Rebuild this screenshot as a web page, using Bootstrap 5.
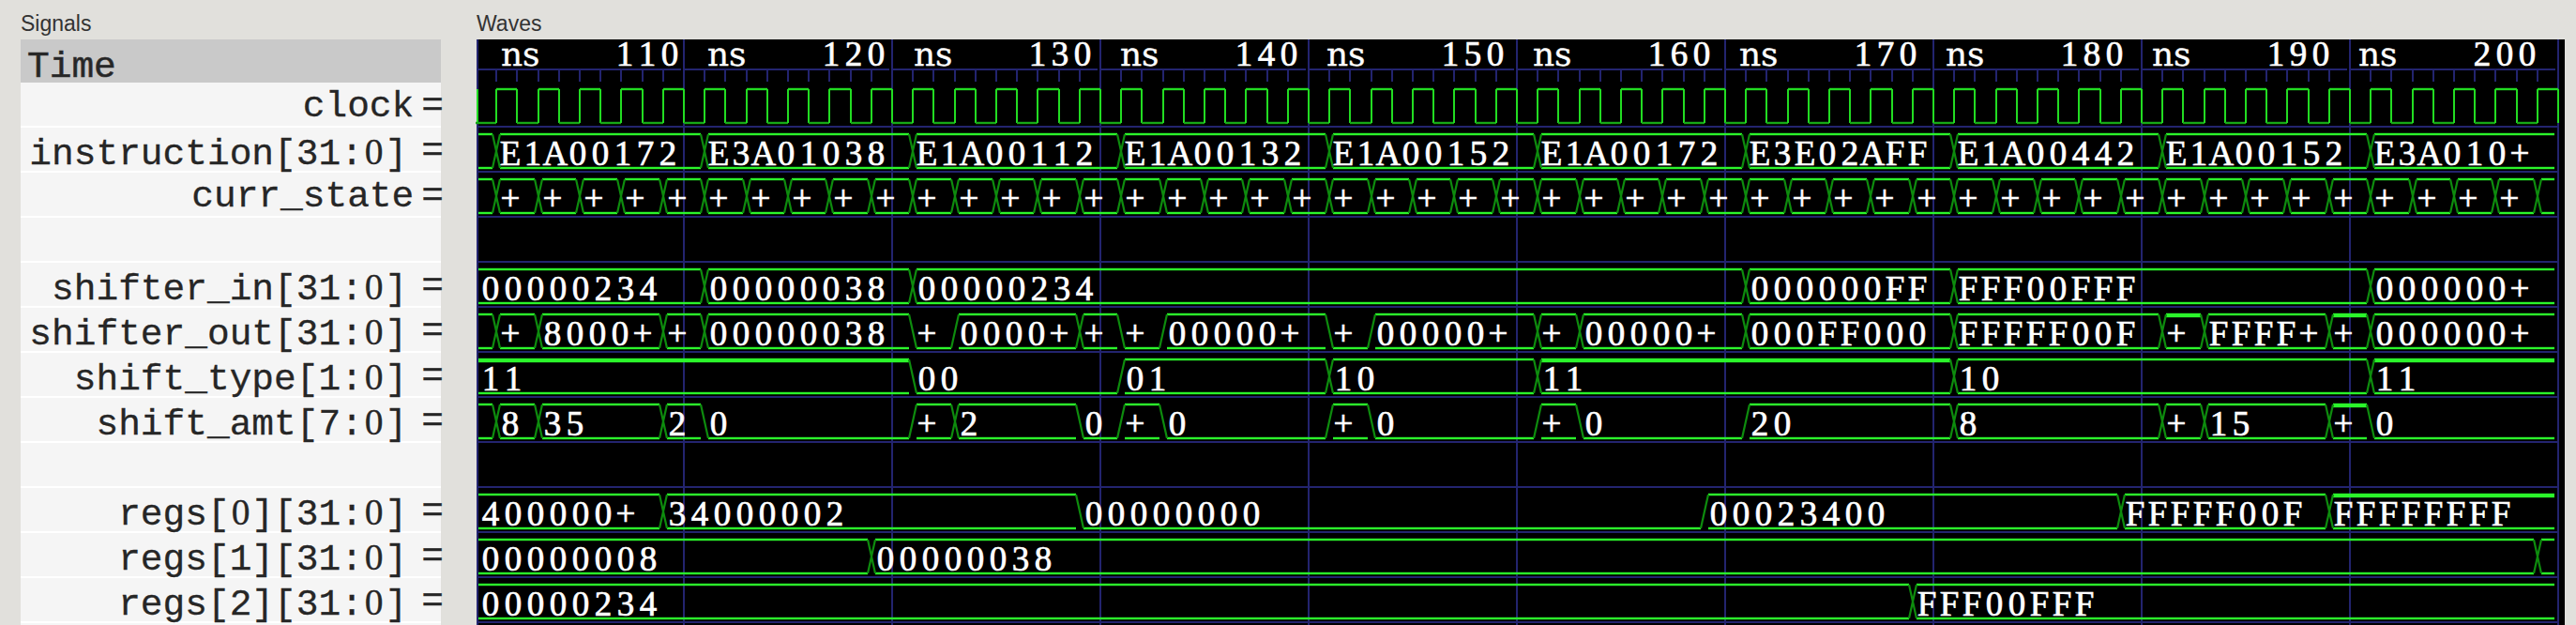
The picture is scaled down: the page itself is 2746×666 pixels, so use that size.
<!DOCTYPE html>
<html lang="en">
<head>
  <meta charset="UTF-8" />
  <title>Waves</title>
  <link href="https://cdn.jsdelivr.net/npm/bootstrap@5.3.3/dist/css/bootstrap.min.css" rel="stylesheet">
  <style>
    html, body { height: 666px; overflow: hidden; }
    body { background: #e1e0dc; padding-left: 22px; }
    .sig-pane { width: 448px; height: 666px; margin-right: 38px; }
    .wave-pane { width: 2226px; height: 666px; }
    .pane-title {
      font: 23px/50px "Liberation Sans", sans-serif;
      color: #333;
      height: 42px;
    }
    .sig-list { background: #f5f5f5; height: 624px; }
    .sig-time, .sig-row {
      font: 39.5px/46px "Liberation Mono", monospace;
      color: #262626;
      -webkit-text-stroke: .3px #262626;
      height: 48px;
      white-space: pre;
    }
    .sig-time { background: #c9c9c9; height: 46px; padding: 6.5px 0 0 7px; -webkit-text-stroke: .6px #333; }
    .sig-row { border-bottom: 2px solid #fff; padding-top: 2.5px; }
    .sig-eq { letter-spacing: -3px; }
    .sig-name { margin-right: 8px; }
    .sig-vec { margin-right: 15px; }
    .zr { font-family: "Liberation Serif", serif; display: inline-block; width: .6em; text-align: center; }
    #waves { display: block; background: #000; overflow: visible; }
    .wave-txt {
      font-family: "Liberation Serif", serif;
      font-size: 37px;
      fill: #fff;
      stroke: #fff;
      stroke-width: .7px;
    }
    .wave-unit { font-family: "DejaVu Serif", serif; font-size: 36px; stroke-width: .3px; }
  </style>
</head>
<body class="d-flex">

<div class="sig-pane d-flex flex-column">
  <div class="pane-title">Signals</div>
  <div class="sig-list d-flex flex-column">
    <div class="sig-time">Time</div>
    <div class="sig-row d-flex justify-content-end"><span class="sig-name">clock</span><span class="sig-eq">=</span></div>
    <div class="sig-row d-flex justify-content-end"><span class="sig-vec">instruction[31:<span class="zr">0</span>]</span><span class="sig-eq">=</span></div>
    <div class="sig-row d-flex justify-content-end"><span class="sig-name">curr_state</span><span class="sig-eq">=</span></div>
    <div class="sig-row"></div>
    <div class="sig-row d-flex justify-content-end"><span class="sig-vec">shifter_in[31:<span class="zr">0</span>]</span><span class="sig-eq">=</span></div>
    <div class="sig-row d-flex justify-content-end"><span class="sig-vec">shifter_out[31:<span class="zr">0</span>]</span><span class="sig-eq">=</span></div>
    <div class="sig-row d-flex justify-content-end"><span class="sig-vec">shift_type[1:<span class="zr">0</span>]</span><span class="sig-eq">=</span></div>
    <div class="sig-row d-flex justify-content-end"><span class="sig-vec">shift_amt[7:<span class="zr">0</span>]</span><span class="sig-eq">=</span></div>
    <div class="sig-row"></div>
    <div class="sig-row d-flex justify-content-end"><span class="sig-vec">regs[<span class="zr">0</span>][31:<span class="zr">0</span>]</span><span class="sig-eq">=</span></div>
    <div class="sig-row d-flex justify-content-end"><span class="sig-vec">regs[1][31:<span class="zr">0</span>]</span><span class="sig-eq">=</span></div>
    <div class="sig-row d-flex justify-content-end"><span class="sig-vec">regs[2][31:<span class="zr">0</span>]</span><span class="sig-eq">=</span></div>
  </div>
</div>

<div class="wave-pane d-flex flex-column">
  <div class="pane-title">Waves</div>
  <svg id="waves" width="2226" height="624" viewBox="508 42 2226 624"></svg>
</div>

<script>
const BLUE = "#23246f", BRIGHT = "#2bf52b", HIGH = "#22dc22", LOW = "#17a817", CROSS = "#0e8c0e";
const PITCH = 24, FS = 37;
const ADV = { "A": .722, "E": .611, "F": .556, "+": .564 };
const svg = document.getElementById("waves");
const X = t => 507 + 22.2 * (t - 100);
let out = "";

function rect(x, y, w, h, fill) {
  out += `<rect x="${x}" y="${y}" width="${w}" height="${h}" fill="${fill}" shape-rendering="crispEdges"/>`;
}
// level lines are a bit over 2px in the picture, so these stay antialiased
function level(x, y, w, h, fill) {
  out += `<rect x="${x}" y="${y - .2}" width="${w}" height="${h + .4}" fill="${fill}"/>`;
}
function slant(x1, y1, x2, y2) {
  out += `<line x1="${x1}" y1="${y1}" x2="${x2}" y2="${y2}" stroke="${CROSS}" stroke-width="2.2"/>`;
}
// every glyph sits centred in a fixed cell, the way the viewer draws them
function label(str, x, y) {
  const xs = [...str].map((c, i) => (x + i * PITCH + (PITCH - (ADV[c] || .5) * FS) / 2).toFixed(1));
  out += `<text class="wave-txt" x="${xs.join(" ")}" y="${y}">${str}</text>`;
}

// grid
rect(508, 42, 2, 624, BLUE);
for (let ns = 110; ns <= 200; ns += 10) rect(Math.round(X(ns)) - 1, 42, 2, 624, BLUE);
for (let ns = 100; ns < 200; ns += 10) {
  rect(Math.round(X(ns)) + 1, 73, 218, 2, BLUE);
  for (let i = 1; i < 10; i++) rect(Math.round(X(ns + i)) - 1, 75, 2, 12, BLUE);
}
for (let k = 0; k < 12; k++) rect(510, 134 + 48 * k, 2217, 2, BLUE);

// clock
rect(508, 95, 2, 37, HIGH);
for (let t = 100; t < 200; t++) {
  const a = Math.round(X(t)), b = Math.round(X(t + 1));
  if (t % 2) level(a, 94, b - a, 2, HIGH);
  else level(a, 130, b - a, 2, LOW);
  rect(b - 1, 95, 2, 36, HIGH);
}

// buses: [start ns, text, "z" all zero | "h" all ones]
const Z = "z", H = "h";
const buses = {
  0: [[100, ""], [101, "E1A00172"], [111, "E3A01038"], [121, "E1A00112"], [131, "E1A00132"], [141, "E1A00152"],
      [151, "E1A00172"], [161, "E3E02AFF"], [171, "E1A00442"], [181, "E1A00152"], [191, "E3A010+"]],
  1: (() => {
    const s = [[100, ""]];
    for (let t = 101; t < 199; t += 2) s.push([t, "+"]);
    s.push([199, ""]);
    return s;
  })(),
  3: [[100, "00000234"], [111, "00000038"], [121, "00000234"], [161, "000000FF"], [171, "FFF00FFF"], [191, "000000+"]],
  4: [[100, ""], [101, "+"], [103, "8000+"], [109, "+"], [111, "00000038"], [121, "+", Z], [123, "0000+"], [129, "+"],
      [131, "+", Z], [133, "00000+"], [141, "+", Z], [143, "00000+"], [151, "+"], [153, "00000+"], [161, "000FF000"],
      [171, "FFFFF00F"], [181, "+", H], [183, "FFFF+"], [189, "+", H], [191, "000000+"]],
  5: [[100, "11", H], [121, "00", Z], [131, "01"], [141, "10"], [151, "11", H], [171, "10"], [191, "11", H]],
  6: [[100, ""], [101, "8"], [103, "35"], [109, "2"], [111, "0", Z], [121, "+"], [123, "2"], [129, "0", Z], [131, "+"],
      [133, "0", Z], [141, "+"], [143, "0", Z], [151, "+"], [153, "0", Z], [161, "20"], [171, "8"], [181, "+"],
      [183, "15"], [189, "+", H], [191, "0", Z]],
  8: [[100, "400000+"], [109, "34000002"], [129, "00000000", Z], [159, "00023400"], [179, "FFFFF00F"], [189, "FFFFFFFF", H]],
  9: [[100, "00000008"], [119, "00000038"], [199, ""]],
  10: [[100, "00000234"], [169, "FFF00FFF"]]
};

for (const k in buses) {
  const segs = buses[k];
  const line = 135 + 48 * k, top = line + 8, bot = line + 44;
  segs.forEach((s, i) => {
    const first = i === 0, last = i === segs.length - 1;
    const a = first ? 510 : Math.round(X(s[0])) + 4;
    const b = last ? 2723 : Math.round(X(segs[i + 1][0])) - 4;
    level(a, bot - 1, b - a, 2, BRIGHT);
    if (s[2] === H) level(a, top - 1, b - a, 4, BRIGHT);
    else if (s[2] !== Z) level(a, top - 1, b - a, 2, BRIGHT);
    if (!first) {
      const x = Math.round(X(s[0])), p = segs[i - 1];
      if (p[2] !== Z) slant(x - 4, top, x + 4, bot);
      if (s[2] !== Z) slant(x - 4, bot, x + 4, top);
    }
    if (s[1]) label(s[1], first ? 511 : Math.round(X(s[0])) + 3, line + 41);
  });
}

// time header
for (let i = 0; i < 10; i++) {
  out += `<text class="wave-txt wave-unit" x="${534 + 220 * i} ${557 + 220 * i}" y="70">ns</text>`;
  label(String(110 + 10 * i), 654 + 220 * i, 70);
}

svg.innerHTML = out;
</script>
<script src="https://cdn.jsdelivr.net/npm/bootstrap@5.3.3/dist/js/bootstrap.bundle.min.js"></script>
</body>
</html>
